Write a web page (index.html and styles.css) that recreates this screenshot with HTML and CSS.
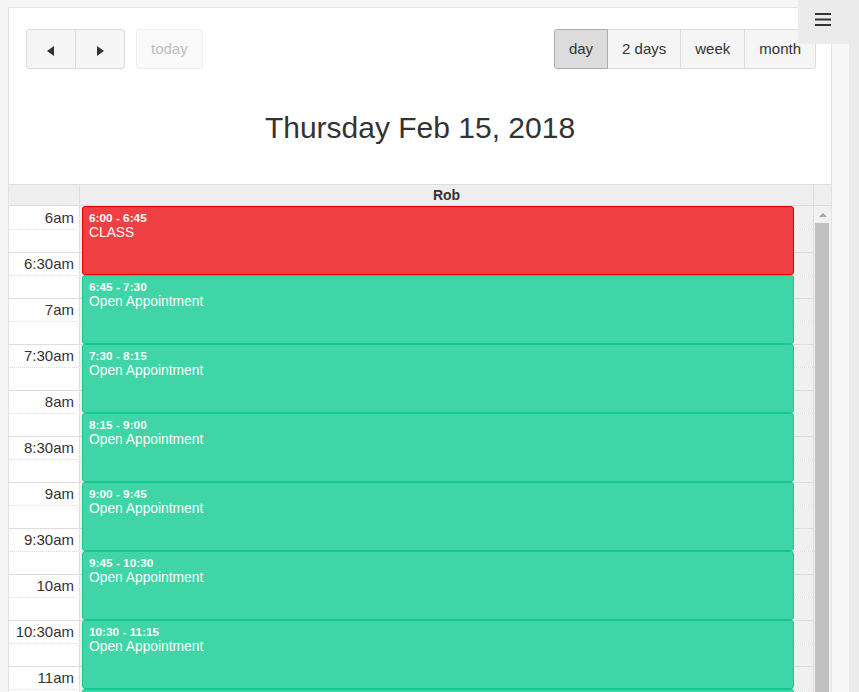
FILE: index.html
```html
<!DOCTYPE html>
<html lang="en">
<head>
  <meta charset="UTF-8">
  <meta name="viewport" content="width=device-width, initial-scale=1.0">
  <title>Schedule</title>
  <link rel="stylesheet" href="styles.css">
</head>
<body>

<div class="page">
  <div class="card">

    <!-- toolbar -->
    <div class="toolbar">
      <div class="left">
        <div class="btn-group">
          <button class="btn nav"><span class="tri tri-left"></span></button>
          <button class="btn nav"><span class="tri tri-right"></span></button>
        </div>
        <button class="btn today" disabled>today</button>
      </div>
      <div class="btn-group">
        <button class="btn active">day</button>
        <button class="btn">2 days</button>
        <button class="btn">week</button>
        <button class="btn">month</button>
      </div>
    </div>

    <h2 class="title">Thursday Feb 15, 2018</h2>

    <!-- resource header -->
    <div class="head">
      <div class="head-axis"></div>
      <div class="head-col">Rob</div>
      <div class="head-gutter"></div>
    </div>

    <!-- time grid -->
    <div class="scroller">
      <div class="grid" id="grid">
        <div class="events" id="events"></div>
      </div>
      <div class="track">
        <div class="arrow"><span></span></div>
        <div class="thumb"></div>
      </div>
    </div>

  </div>
</div>
<div class="strip"></div>
<div class="rail"></div>

<div class="menu-btn">
  <svg width="16" height="14" viewBox="0 0 16 14">
    <rect x="0" y="0" width="16" height="2" fill="#333"/>
    <rect x="0" y="5.5" width="16" height="2" fill="#333"/>
    <rect x="0" y="11" width="16" height="2" fill="#333"/>
  </svg>
</div>

<script>
+function(){

  var SLOT = 23; // px per 15 minutes
  var grid = document.getElementById('grid');
  var layer = document.getElementById('events');

  // slot rows 6:00 - 11:45
  for (var i = 0; i < 22; i++) {
    var mins = 6 * 60 + i * 15;
    var h = Math.floor(mins / 60), m = mins % 60;
    var row = document.createElement('div');
    row.className = 'slot' + (m % 30 ? ' minor' : '');
    var label = '';
    if (m === 0) label = h + 'am';
    if (m === 30) label = h + ':30am';
    row.innerHTML = '<div class="axis">' + label + '</div><div class="lane"></div>';
    grid.insertBefore(row, layer);
  }

  var events = [
    ['6:00', '6:45', 'CLASS', 'red'],
    ['6:45', '7:30', 'Open Appointment'],
    ['7:30', '8:15', 'Open Appointment'],
    ['8:15', '9:00', 'Open Appointment'],
    ['9:00', '9:45', 'Open Appointment'],
    ['9:45', '10:30', 'Open Appointment'],
    ['10:30', '11:15', 'Open Appointment']
  ];

  function toMin(s){
    var p = s.split(':');
    return +p[0] * 60 + +p[1];
  }

  events.forEach(function(ev){
    var start = toMin(ev[0]) - 360;
    var len = toMin(ev[1]) - toMin(ev[0]);
    var el = document.createElement('div');
    el.className = 'event' + (ev[3] ? ' ' + ev[3] : '');
    el.style.top = (start / 15 * SLOT) + 'px';
    el.style.height = (len / 15 * SLOT) + 'px';
    el.innerHTML = '<div class="time">' + ev[0] + ' - ' + ev[1] + '</div><div class="name">' + ev[2] + '</div>';
    layer.appendChild(el);
  });

  // next event only peeks in at the bottom edge
  var tail = document.createElement('div');
  tail.className = 'event';
  tail.style.top = (21 * SLOT) + 'px';
  tail.style.height = (3 * SLOT) + 'px';
  layer.appendChild(tail);

}();
</script>

</body>
</html>
```

FILE: styles.css
```css
html,body{
  margin: 0;
  height: 692px;
  overflow: hidden;
}
body{
  display: flex;
  background-color: #f5f5f5;
  font-family: "Liberation Sans", Arial, sans-serif;
  color: #333;
}

.page{
  flex: none;
  padding: 7px 0 0 8px;
}
.strip{
  flex: none;
  width: 17px;
  background-color: #f7f7f7;
}
.rail{
  flex: none;
  width: 10px;
  background-color: #ebebeb;
}

.card{
  width: 824px;
  box-sizing: border-box;
  background-color: #fff;
  border: 1px solid #e2e2e2;
}

/* toolbar */
.toolbar{
  display: flex;
  justify-content: space-between;
  padding: 21px 15px 0 17px;
}
.toolbar .left{
  display: flex;
  gap: 11px;
}
.btn-group{
  display: flex;
}
.btn{
  height: 40px;
  padding: 0 14px 1px;
  margin: 0;
  font-family: inherit;
  font-size: 15px;
  color: #333;
  background-color: #f5f5f5;
  border: 1px solid #dcdcdc;
  border-radius: 0;
  cursor: pointer;
}
.btn-group .btn + .btn{
  margin-left: -1px;
}
.btn-group .btn:first-child{
  border-radius: 3px 0 0 3px;
}
.btn-group .btn:last-child{
  border-radius: 0 3px 3px 0;
}
.btn.active{
  background-color: #dcdcdc;
  border-color: #acacac;
  position: relative;
}
.btn.today{
  border-radius: 3px;
  background-color: #fafafa;
  border-color: #eeeeee;
  color: #bdbdbd;
  cursor: default;
}
.btn.nav{
  width: 50px;
  padding: 0;
}
.tri{
  display: inline-block;
  width: 0;
  height: 0;
  border-top: 5px solid transparent;
  border-bottom: 5px solid transparent;
  vertical-align: middle;
}
.tri-left{
  border-right: 7px solid #333;
  margin-right: 2px;
}
.tri-right{
  border-left: 7px solid #333;
  margin-left: 1px;
}

.title{
  margin: 42px 0 40px;
  font-size: 30px;
  line-height: 33px;
  font-weight: normal;
  text-align: center;
  color: #333;
}

/* header row */
.head{
  display: flex;
  height: 20px;
  background-color: #eee;
  border-top: 1px solid #ddd;
  border-bottom: 1px solid #ddd;
}
.head-axis{
  width: 70px;
  border-right: 1px solid #ddd;
}
.head-col{
  flex: 1;
  border-right: 1px solid #ddd;
  font-size: 14px;
  font-weight: bold;
  line-height: 20px;
  text-align: center;
}
.head-gutter{
  width: 17px;
}

/* body */
.scroller{
  display: flex;
  height: 486px;
  overflow: hidden;
}
.grid{
  flex: 1;
  position: relative;
  border-right: 1px solid #ddd;
}
.slot{
  display: flex;
  height: 23px;
  box-sizing: border-box;
  border-top: 1px solid #ddd;
}
.slot:first-child{
  border-top: 0;
}
.slot.minor{
  border-top-style: dotted;
}
.axis{
  width: 65px;
  padding-right: 5px;
  border-right: 1px solid #ddd;
  text-align: right;
  font-size: 15px;
  line-height: 22px;
  white-space: nowrap;
}
.slot:first-child .axis{
  line-height: 23px;
}
.lane{
  flex: 1;
  background-color: #f0f0f0;
}

.events{
  position: absolute;
  top: 0;
  left: 73px;
  right: 19px;
}
.event{
  position: absolute;
  left: 0;
  right: 0;
  box-sizing: border-box;
  padding: 5px 6px 0;
  border: 1px solid #14c78c;
  border-radius: 3px;
  background-color: #40d5a7;
  color: #fff;
  overflow: hidden;
}
.event.red{
  border-color: #e40000;
  background-color: #ee4043;
}
.event .time{
  font-size: 11.8px;
  font-weight: bold;
  line-height: 13px;
}
.event .name{
  font-size: 13.8px;
  line-height: 16px;
}

/* scrollbar */
.track{
  width: 17px;
  background-color: #f1f1f1;
}
.track .arrow{
  height: 17px;
  display: flex;
  justify-content: center;
}
.track .arrow span{
  margin-top: 7px;
  width: 0;
  height: 0;
  border-left: 4px solid transparent;
  border-right: 4px solid transparent;
  border-bottom: 4px solid #a3a3a3;
}
.track .thumb{
  height: 600px;
  margin: 0 2px 0 1px;
  background-color: #c1c1c1;
}

/* top right menu */
.menu-btn{
  position: absolute;
  top: 0;
  right: 0;
  width: 61px;
  height: 44px;
  padding: 13px 0 0 17px;
  box-sizing: border-box;
  background-color: #ebebeb;
  cursor: pointer;
}
.menu-btn svg{
  display: block;
}
```
